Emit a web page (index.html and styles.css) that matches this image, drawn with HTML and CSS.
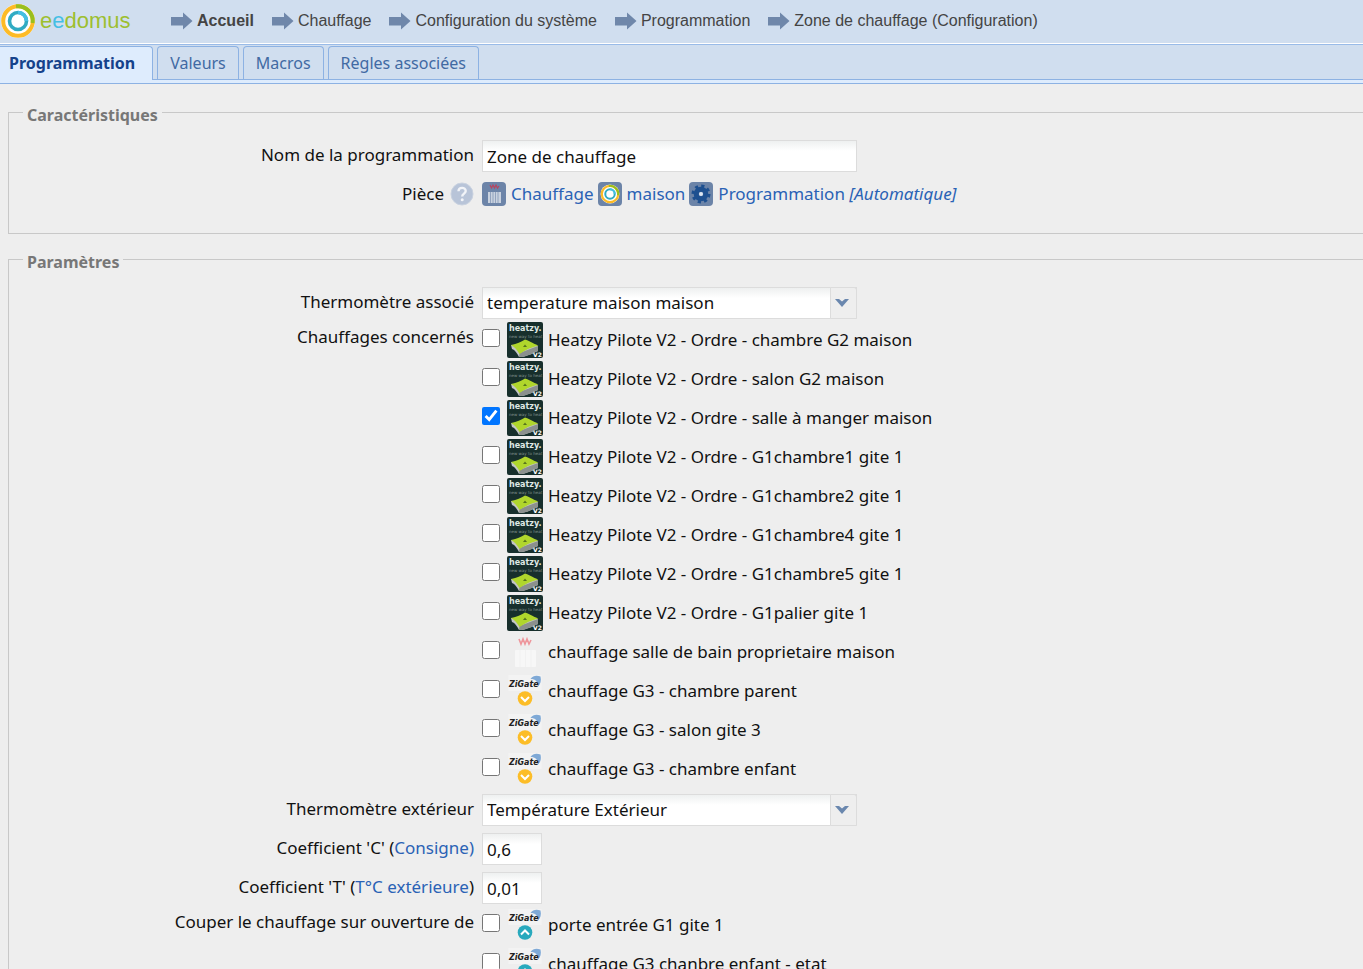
FILE: index.html
```
<!DOCTYPE html>
<html lang="fr">
<head>
<meta charset="utf-8">
<title>eedomus - Zone de chauffage</title>
<link rel="stylesheet" href="styles.css">
</head>
<body>
<svg class="sprite" aria-hidden="true">
  <symbol id="arrow" viewBox="0 0 22 18"><path d="M0 5H12V0.500L21.500 9L12 17.500V13.500H0Z" fill="#6f87aa"/></symbol>
  <symbol id="ring" viewBox="0 0 36 36">
    <circle cx="18" cy="18" r="17" fill="#fff"/>
    <circle cx="18" cy="18" r="14.800" fill="none" stroke="#fdbb26" stroke-width="4"/>
    <path d="M16 3.300A14.800 14.800 0 0 1 32.600 20" fill="none" stroke="#98bf1f" stroke-width="4"/>
    <circle cx="18" cy="18" r="8.500" fill="none" stroke="#30abc3" stroke-width="3.600"/>
    <path d="M18 9.500A8.500 8.500 0 0 1 26.500 18" fill="none" stroke="#45bfe4" stroke-width="3.600"/>
  </symbol>
  <symbol id="heatzy" viewBox="0 0 36 36">
    <rect width="36" height="36" rx="2" fill="#172f2c"/>
    <text x="2" y="9" class="heatzy-name">heatzy.</text>
    <text x="2" y="16" class="heatzy-motto">new way to heat</text>
    <path d="M4 23L5 27C8 28 10 31 12 35C18 35.500 24 32 31 29V24Z" fill="#c3c6c4"/>
    <path d="M12.500 31L12 35C18 35.500 24 32 31 29V24Z" fill="#8b908e"/>
    <path d="M4 23C10 22 14 20 18 17.500C22 18.500 25 21 31.300 23.500C25 25 18 28 12.500 32C10 28 8 25 4 23Z" fill="#b0d62c"/>
    <path d="M18 22.500L20 25H16Z" fill="#57751d"/>
    <text x="26" y="35" class="heatzy-version">V2</text>
  </symbol>
  <symbol id="radiator" viewBox="0 0 36 36">
    <path d="M12 5L14 10L16 5L18 10L20 5L22 10L24 6" fill="none" stroke="#ee969c" stroke-width="1.600"/>
    <rect x="8" y="16" width="21" height="17" rx="1" fill="#f7f7f7"/>
    <path d="M13 16V33M18.500 16V33M24 16V33" stroke="#f1f1f1"/>
  </symbol>
  <symbol id="zigate" viewBox="0 0 36 36">
    <rect x="1.500" y="2" width="33" height="16" fill="#f3f3f3"/>
    <path d="M23.500 6C26 2.500 29.500 2 33.500 3.500C34.500 8 33.500 11 31 13.500C31 8.500 28.500 6 23.500 6Z" fill="#7fa9d6"/>
    <text x="2" y="14" class="zigate-name">ZiGate</text>
  </symbol>
  <symbol id="zigate-down" viewBox="0 0 36 36">
    <use href="#zigate"/>
    <circle cx="18" cy="25.500" r="7.300" fill="#fcbd27"/>
    <path d="M14 24L18 28L22 24" fill="none" stroke="#fff" stroke-width="2"/>
  </symbol>
  <symbol id="zigate-up" viewBox="0 0 36 36">
    <use href="#zigate"/>
    <circle cx="18" cy="25.500" r="7.300" fill="#28a9bd"/>
    <path d="M14 27.500L18 23.500L22 27.500" fill="none" stroke="#fff" stroke-width="2"/>
  </symbol>
  <symbol id="chevron" viewBox="0 0 14 8"><path d="M0 0H4L7 2.500L10 0H14L7 8Z" fill="#6a87ae"/></symbol>
</svg>

<header class="topbar">
  <a class="brand" href="#" aria-label="eedomus">
    <svg class="brand-mark"><use href="#ring"/></svg>
    <span class="brand-name">e<span class="brand-blue">e</span>domus</span>
  </a>
  <nav class="crumbs" aria-label="Fil d'Ariane">
    <a class="crumb crumb-home" href="#"><svg class="arrow"><use href="#arrow"/></svg>Accueil</a>
    <a class="crumb" href="#"><svg class="arrow"><use href="#arrow"/></svg>Chauffage</a>
    <a class="crumb" href="#"><svg class="arrow"><use href="#arrow"/></svg>Configuration du système</a>
    <a class="crumb" href="#"><svg class="arrow"><use href="#arrow"/></svg>Programmation</a>
    <a class="crumb" href="#"><svg class="arrow"><use href="#arrow"/></svg>Zone de chauffage (Configuration)</a>
  </nav>
</header>

<div class="tabs" role="tablist">
  <button class="tab tab-active" role="tab" aria-selected="true">Programmation</button>
  <button class="tab" role="tab">Valeurs</button>
  <button class="tab" role="tab">Macros</button>
  <button class="tab" role="tab">Règles associées</button>
</div>
<div class="tab-strip"></div>

<form class="form">
  <fieldset class="group">
    <legend>Caractéristiques</legend>
    <div class="row">
      <label class="label" for="name">Nom de la programmation</label>
      <input class="field" id="name" type="text" value="Zone de chauffage">
    </div>
    <div class="row">
      <span class="label label-help">Pièce
        <svg class="help" viewBox="0 0 24 24"><circle cx="12" cy="12" r="11" fill="#b8c4d8" stroke="#c9d2e0"/><path d="M8.500 9.300C8.500 4.800 15.700 4.800 15.700 9C15.700 11.600 12.200 11.600 12.200 14.500" fill="none" stroke="#f2f4f8" stroke-width="2.400"/><circle cx="12.200" cy="17.800" r="1.500" fill="#f2f4f8"/></svg>
      </span>
      <div class="rooms">
        <a class="room" href="#"><svg class="room-icon" viewBox="0 0 24 24"><rect width="24" height="24" rx="4" fill="#6c84a8"/><path d="M8 3L9.500 6L11 3L12.500 6L14 3L15.500 6L17 4" fill="none" stroke="#b8455f" stroke-width="1.200"/><path d="M6 10H19V21H6Z" fill="#c9d2df"/><path d="M8.500 10V21M11 10V21M13.500 10V21M16 10V21" stroke="#8497b5" stroke-width="0.800"/></svg>Chauffage</a>
        <a class="room" href="#"><svg class="room-icon" viewBox="0 0 24 24"><rect width="24" height="24" rx="4" fill="#6c84a8"/><use href="#ring" x="2" y="2" width="20" height="20"/></svg>maison</a>
        <a class="room" href="#"><svg class="room-icon" viewBox="0 0 24 24"><rect width="24" height="24" rx="4" fill="#6c84a8"/><circle cx="12" cy="12" r="8" fill="none" stroke="#1e5090" stroke-width="3" stroke-dasharray="3.140 3.140"/><circle cx="12" cy="12" r="4.800" fill="none" stroke="#1e5090" stroke-width="5"/><circle cx="12" cy="12" r="2" fill="#dce6f2"/></svg><span>Programmation <em>[Automatique]</em></span></a>
      </div>
    </div>
  </fieldset>

  <fieldset class="group">
    <legend>Paramètres</legend>
    <div class="row">
      <label class="label" for="thermo">Thermomètre associé</label>
      <div class="combo">
        <select class="field" id="thermo"><option>temperature maison maison</option></select>
        <span class="trigger"><svg class="chevron"><use href="#chevron"/></svg></span>
      </div>
    </div>
    <div class="row row-checks">
      <span class="label" id="heaters">Chauffages concernés</span>
      <div class="checks" role="group" aria-labelledby="heaters">
        <label class="check"><input type="checkbox"><svg class="device"><use href="#heatzy"/></svg>Heatzy Pilote V2 - Ordre - chambre G2 maison</label>
        <label class="check"><input type="checkbox"><svg class="device"><use href="#heatzy"/></svg>Heatzy Pilote V2 - Ordre - salon G2 maison</label>
        <label class="check"><input type="checkbox" checked><svg class="device"><use href="#heatzy"/></svg>Heatzy Pilote V2 - Ordre - salle à manger maison</label>
        <label class="check"><input type="checkbox"><svg class="device"><use href="#heatzy"/></svg>Heatzy Pilote V2 - Ordre - G1chambre1 gite 1</label>
        <label class="check"><input type="checkbox"><svg class="device"><use href="#heatzy"/></svg>Heatzy Pilote V2 - Ordre - G1chambre2 gite 1</label>
        <label class="check"><input type="checkbox"><svg class="device"><use href="#heatzy"/></svg>Heatzy Pilote V2 - Ordre - G1chambre4 gite 1</label>
        <label class="check"><input type="checkbox"><svg class="device"><use href="#heatzy"/></svg>Heatzy Pilote V2 - Ordre - G1chambre5 gite 1</label>
        <label class="check"><input type="checkbox"><svg class="device"><use href="#heatzy"/></svg>Heatzy Pilote V2 - Ordre - G1palier gite 1</label>
        <label class="check"><input type="checkbox"><svg class="device"><use href="#radiator"/></svg>chauffage salle de bain proprietaire maison</label>
        <label class="check"><input type="checkbox"><svg class="device"><use href="#zigate-down"/></svg>chauffage G3 - chambre parent</label>
        <label class="check"><input type="checkbox"><svg class="device"><use href="#zigate-down"/></svg>chauffage G3 - salon gite 3</label>
        <label class="check"><input type="checkbox"><svg class="device"><use href="#zigate-down"/></svg>chauffage G3 - chambre enfant</label>
      </div>
    </div>
    <div class="row">
      <label class="label" for="outdoor">Thermomètre extérieur</label>
      <div class="combo">
        <select class="field" id="outdoor"><option>Température Extérieur</option></select>
        <span class="trigger"><svg class="chevron"><use href="#chevron"/></svg></span>
      </div>
    </div>
    <div class="row">
      <label class="label" for="coef-c">Coefficient 'C' (<a href="#">Consigne)</a></label>
      <input class="field field-short" id="coef-c" type="text" value="0,6">
    </div>
    <div class="row">
      <label class="label" for="coef-t">Coefficient 'T' (<a href="#">T°C extérieure</a>)</label>
      <input class="field field-short" id="coef-t" type="text" value="0,01">
    </div>
    <div class="row row-checks">
      <span class="label" id="openings">Couper le chauffage sur ouverture de</span>
      <div class="checks" role="group" aria-labelledby="openings">
        <label class="check"><input type="checkbox"><svg class="device"><use href="#zigate-up"/></svg>porte entrée G1 gite 1</label>
        <label class="check"><input type="checkbox"><svg class="device"><use href="#zigate-up"/></svg>chauffage G3 chanbre enfant - etat</label>
      </div>
    </div>
  </fieldset>
</form>
</body>
</html>
```
FILE: styles.css
```
* { box-sizing: border-box; }

body {
  margin: 0;
  height: 100vh;
  overflow: hidden;
  background: #eee;
  color: #111;
  font: 17px/24px "Noto Sans", "Open Sans", sans-serif;
}

a { color: #2a62b5; text-decoration: none; }
button, input, select { font: inherit; color: inherit; }
.sprite { display: none; }

.topbar {
  display: flex;
  align-items: center;
  height: 44px;
  padding-bottom: 2px;
  background: #d0deef;
  border-bottom: 1px solid #fff;
}
.brand { display: flex; align-items: center; gap: 4px; width: 171px; color: #9dbf30; }
.brand-mark { width: 36px; height: 36px; }
.brand-name { font: 22px/28px "Liberation Sans", sans-serif; }
.brand-blue { color: #45bfe4; }
.crumbs { display: flex; gap: 18px; }
.crumb {
  display: flex;
  align-items: center;
  gap: 4px;
  color: #444;
  font: 16px/20px "Liberation Sans", sans-serif;
  white-space: nowrap;
}
.crumb-home { font-weight: bold; }
.arrow { width: 22px; height: 18px; }

.tabs {
  display: flex;
  gap: 4px;
  height: 36px;
  padding-top: 1px;
  background: #d0deef;
  border-top: 1px solid #99bbe8;
  border-bottom: 1px solid #8db2e3;
}
.tab {
  padding: 0 12px 1px;
  background: #d0deef;
  border: 1px solid #8db2e3;
  border-bottom: 0;
  border-radius: 4px 4px 0 0;
  color: #416aa3;
  font-size: 16px;
}
.tab-active {
  margin-bottom: -1px;
  padding: 0 17px 2px 9px;
  background: #deecfd;
  border-left: 0;
  border-top-left-radius: 0;
  color: #15428b;
  font-weight: bold;
}
.tab-strip { height: 4px; background: #deecfd; border-bottom: 1px solid #8db2e3; }

.form { display: flex; flex-direction: column; gap: 10px; padding: 13px 0 0 8px; }
.group {
  display: flex;
  flex-direction: column;
  min-width: 0;
  margin: 0;
  padding: 13px 0 20px;
  border: 1px solid #c8c8c8;
  border-right: 0;
}
.group legend { margin-left: 14px; padding: 6px 4px 0; color: #777; font-size: 16px; font-weight: bold; }

.row { display: grid; grid-template-columns: 465px 1fr; column-gap: 8px; padding-bottom: 7px; }
.row-checks { margin-top: -4px; }
.label { padding-top: 3px; text-align: right; }
.label-help { display: flex; justify-content: flex-end; align-items: center; gap: 6px; }
.help { width: 24px; height: 24px; }

.field {
  width: 375px;
  height: 32px;
  padding: 0 4px;
  background: linear-gradient(#eef0f0, #fff 10px);
  border: 1px solid #dcdcdc;
  border-radius: 0;
  appearance: none;
}
.field-short { width: 60px; }
.combo { position: relative; width: 375px; height: 32px; }
.trigger {
  position: absolute;
  top: 0;
  right: 0;
  display: grid;
  place-items: center;
  width: 27px;
  height: 32px;
  padding-right: 3px;
  background: #eee;
  border: 1px solid #dcdcdc;
  border-radius: 0 3px 0 0;
  pointer-events: none;
}
.chevron { width: 14px; height: 8px; }

.rooms { display: flex; gap: 4px; padding-top: 3px; }
.room { display: flex; gap: 5px; align-items: center; white-space: nowrap; }
.room-icon { width: 24px; height: 24px; }

.checks { display: flex; flex-direction: column; gap: 3px; }
.check { display: flex; align-items: center; height: 36px; }
.check input { width: 18px; height: 18px; margin: 0 7px 4px 0; }
.device { width: 36px; height: 36px; margin-right: 5px; }

.heatzy-name { font: bold 8px "DejaVu Sans", sans-serif; fill: #dfe8e4; }
.heatzy-motto { font: 4px "DejaVu Sans", sans-serif; fill: #82918e; }
.heatzy-version { font: bold 6px "DejaVu Sans", sans-serif; fill: #fff; }
.zigate-name { font: italic bold 8px "DejaVu Sans", sans-serif; fill: #222; }
```
